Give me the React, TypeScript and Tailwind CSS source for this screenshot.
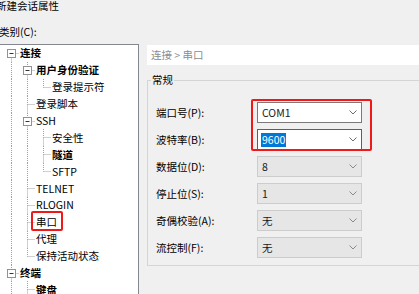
import React from "react";

type Node = {
  label: string;
  level: number;
  bold?: boolean;
  exp?: boolean;
  first?: boolean;
  next: boolean;
  guides: boolean[];
};

const TREE: Node[] = [
  { label: "连接", level: 0, bold: true, exp: true, first: true, next: true, guides: [] },
  { label: "用户身份验证", level: 1, bold: true, exp: true, next: true, guides: [true] },
  { label: "登录提示符", level: 2, next: false, guides: [true, true] },
  { label: "登录脚本", level: 1, next: true, guides: [true] },
  { label: "SSH", level: 1, exp: true, next: true, guides: [true] },
  { label: "安全性", level: 2, next: true, guides: [true, true] },
  { label: "隧道", level: 2, bold: true, next: true, guides: [true, true] },
  { label: "SFTP", level: 2, next: false, guides: [true, true] },
  { label: "TELNET", level: 1, next: true, guides: [true] },
  { label: "RLOGIN", level: 1, next: true, guides: [true] },
  { label: "串口", level: 1, next: true, guides: [true] },
  { label: "代理", level: 1, next: true, guides: [true] },
  { label: "保持活动状态", level: 1, next: false, guides: [true] },
  { label: "终端", level: 0, bold: true, exp: true, next: true, guides: [] },
  { label: "键盘", level: 1, bold: true, next: true, guides: [true] },
];

const FIELDS = [
  { label: "端口号(P):", value: "COM1", kind: "normal" },
  { label: "波特率(B):", value: "9600", kind: "focus" },
  { label: "数据位(D):", value: "8", kind: "off" },
  { label: "停止位(S):", value: "1", kind: "off" },
  { label: "奇偶校验(A):", value: "无", kind: "off" },
  { label: "流控制(F):", value: "无", kind: "off" },
];

const DOT = { stroke: "#a0a0a0", strokeWidth: 1, strokeDasharray: "1 1" };

function Guide({ on }: { on: boolean }) {
  return (
    <svg width="16" height="17" className="shrink-0">
      {on && <line x1="8.5" y1="0" x2="8.5" y2="17" {...DOT} />}
    </svg>
  );
}

function Connector({ n }: { n: Node }) {
  return (
    <svg width="16" height="17" className="shrink-0">
      {!n.first && <line x1="8.5" y1="0" x2="8.5" y2="8.5" {...DOT} />}
      {n.next && <line x1="8.5" y1="8.5" x2="8.5" y2="17" {...DOT} />}
      <line x1="8.5" y1="8.5" x2="16" y2="8.5" {...DOT} />
      {n.exp && (
        <>
          <rect x="4.5" y="4.5" width="8" height="8" fill="#fff" stroke="#929292" />
          <line x1="6.5" y1="8.5" x2="10.5" y2="8.5" stroke="#333" />
        </>
      )}
    </svg>
  );
}

function Chevron({ color }: { color: string }) {
  return (
    <svg width="8" height="5" viewBox="0 0 8 5" className="shrink-0">
      <polyline points="0.5,0.5 4,4 7.5,0.5" fill="none" stroke={color} strokeWidth="1" />
    </svg>
  );
}

function Combo({ value, kind }: { value: string; kind: string }) {
  const box =
    kind === "focus"
      ? "bg-white border-[#0078d7]"
      : kind === "normal"
        ? "bg-white border-[#7a7a7a]"
        : "bg-[#e6e6e6] border-[#cccccc]";
  return (
    <div className={`flex h-[21px] w-[105px] items-center justify-between border pl-[3px] pr-[4px] ${box}`}>
      {kind === "focus" ? (
        <span className="bg-[#0078d7] px-[1px] leading-[14px] text-white">{value}</span>
      ) : (
        <span className="px-[1px] text-[#1a1a1a]">{value}</span>
      )}
      <Chevron color={kind === "off" ? "#8a8a8a" : "#6d6d6d"} />
    </div>
  );
}

export default function App() {
  return (
    <div className="relative h-[294px] w-[419px] overflow-hidden bg-[#f0f0f0] font-['Noto_Sans_CJK_SC','Noto_Sans',sans-serif] text-[10.5px] text-black">
      <div className="-ml-[4px] h-[12px] leading-[12px]">新建会话属性</div>
      <div className="-ml-[1px] mt-[14px] h-[12px] leading-[12px]">类别(C):</div>

      <div className="mt-[6px] flex items-start">
        {/* tree */}
        <div className="-ml-[2px] h-[260px] w-[141px] shrink-0 border border-[#828790] bg-white pl-[4px]">
          {TREE.map((n) => (
            <div key={n.label} className="flex h-[16.9px] items-center overflow-visible">
              {n.guides.map((g, i) => (
                <Guide key={i} on={g} />
              ))}
              <Connector n={n} />
              <span className={`pl-[1px] leading-[16px] whitespace-nowrap ${n.bold ? "font-bold" : ""}`}>
                {n.label}
              </span>
            </div>
          ))}
        </div>

        {/* right panel */}
        <div className="ml-[8px] w-[290px] shrink-0 pt-[1px]">
          <div className="flex h-[20px] items-center bg-white pl-[4px] text-[#8c8c8c]">连接 &gt; 串口</div>

          <fieldset className="mt-[9px] border border-[#d5d5d5] px-[8px] pt-[16px] pb-[7px]">
            <legend className="-ml-[5px] px-[1px] leading-[12px]">常规</legend>
            <div className="flex flex-col gap-[6px]">
              {FIELDS.map((f) => (
                <div key={f.label} className="flex h-[21px] items-center">
                  <span className="w-[101px] shrink-0 whitespace-nowrap">{f.label}</span>
                  <Combo value={f.value} kind={f.kind} />
                </div>
              ))}
            </div>
          </fieldset>
        </div>
      </div>

      {/* annotation boxes */}
      <div className="absolute left-[251px] top-[99px] h-[52px] w-[121px] rounded-[2px] border-[2.5px] border-[#f01818]" />
      <div className="absolute left-[31px] top-[211px] h-[20px] w-[32px] rounded-[2px] border-[2.5px] border-[#f01818]" />
    </div>
  );
}
